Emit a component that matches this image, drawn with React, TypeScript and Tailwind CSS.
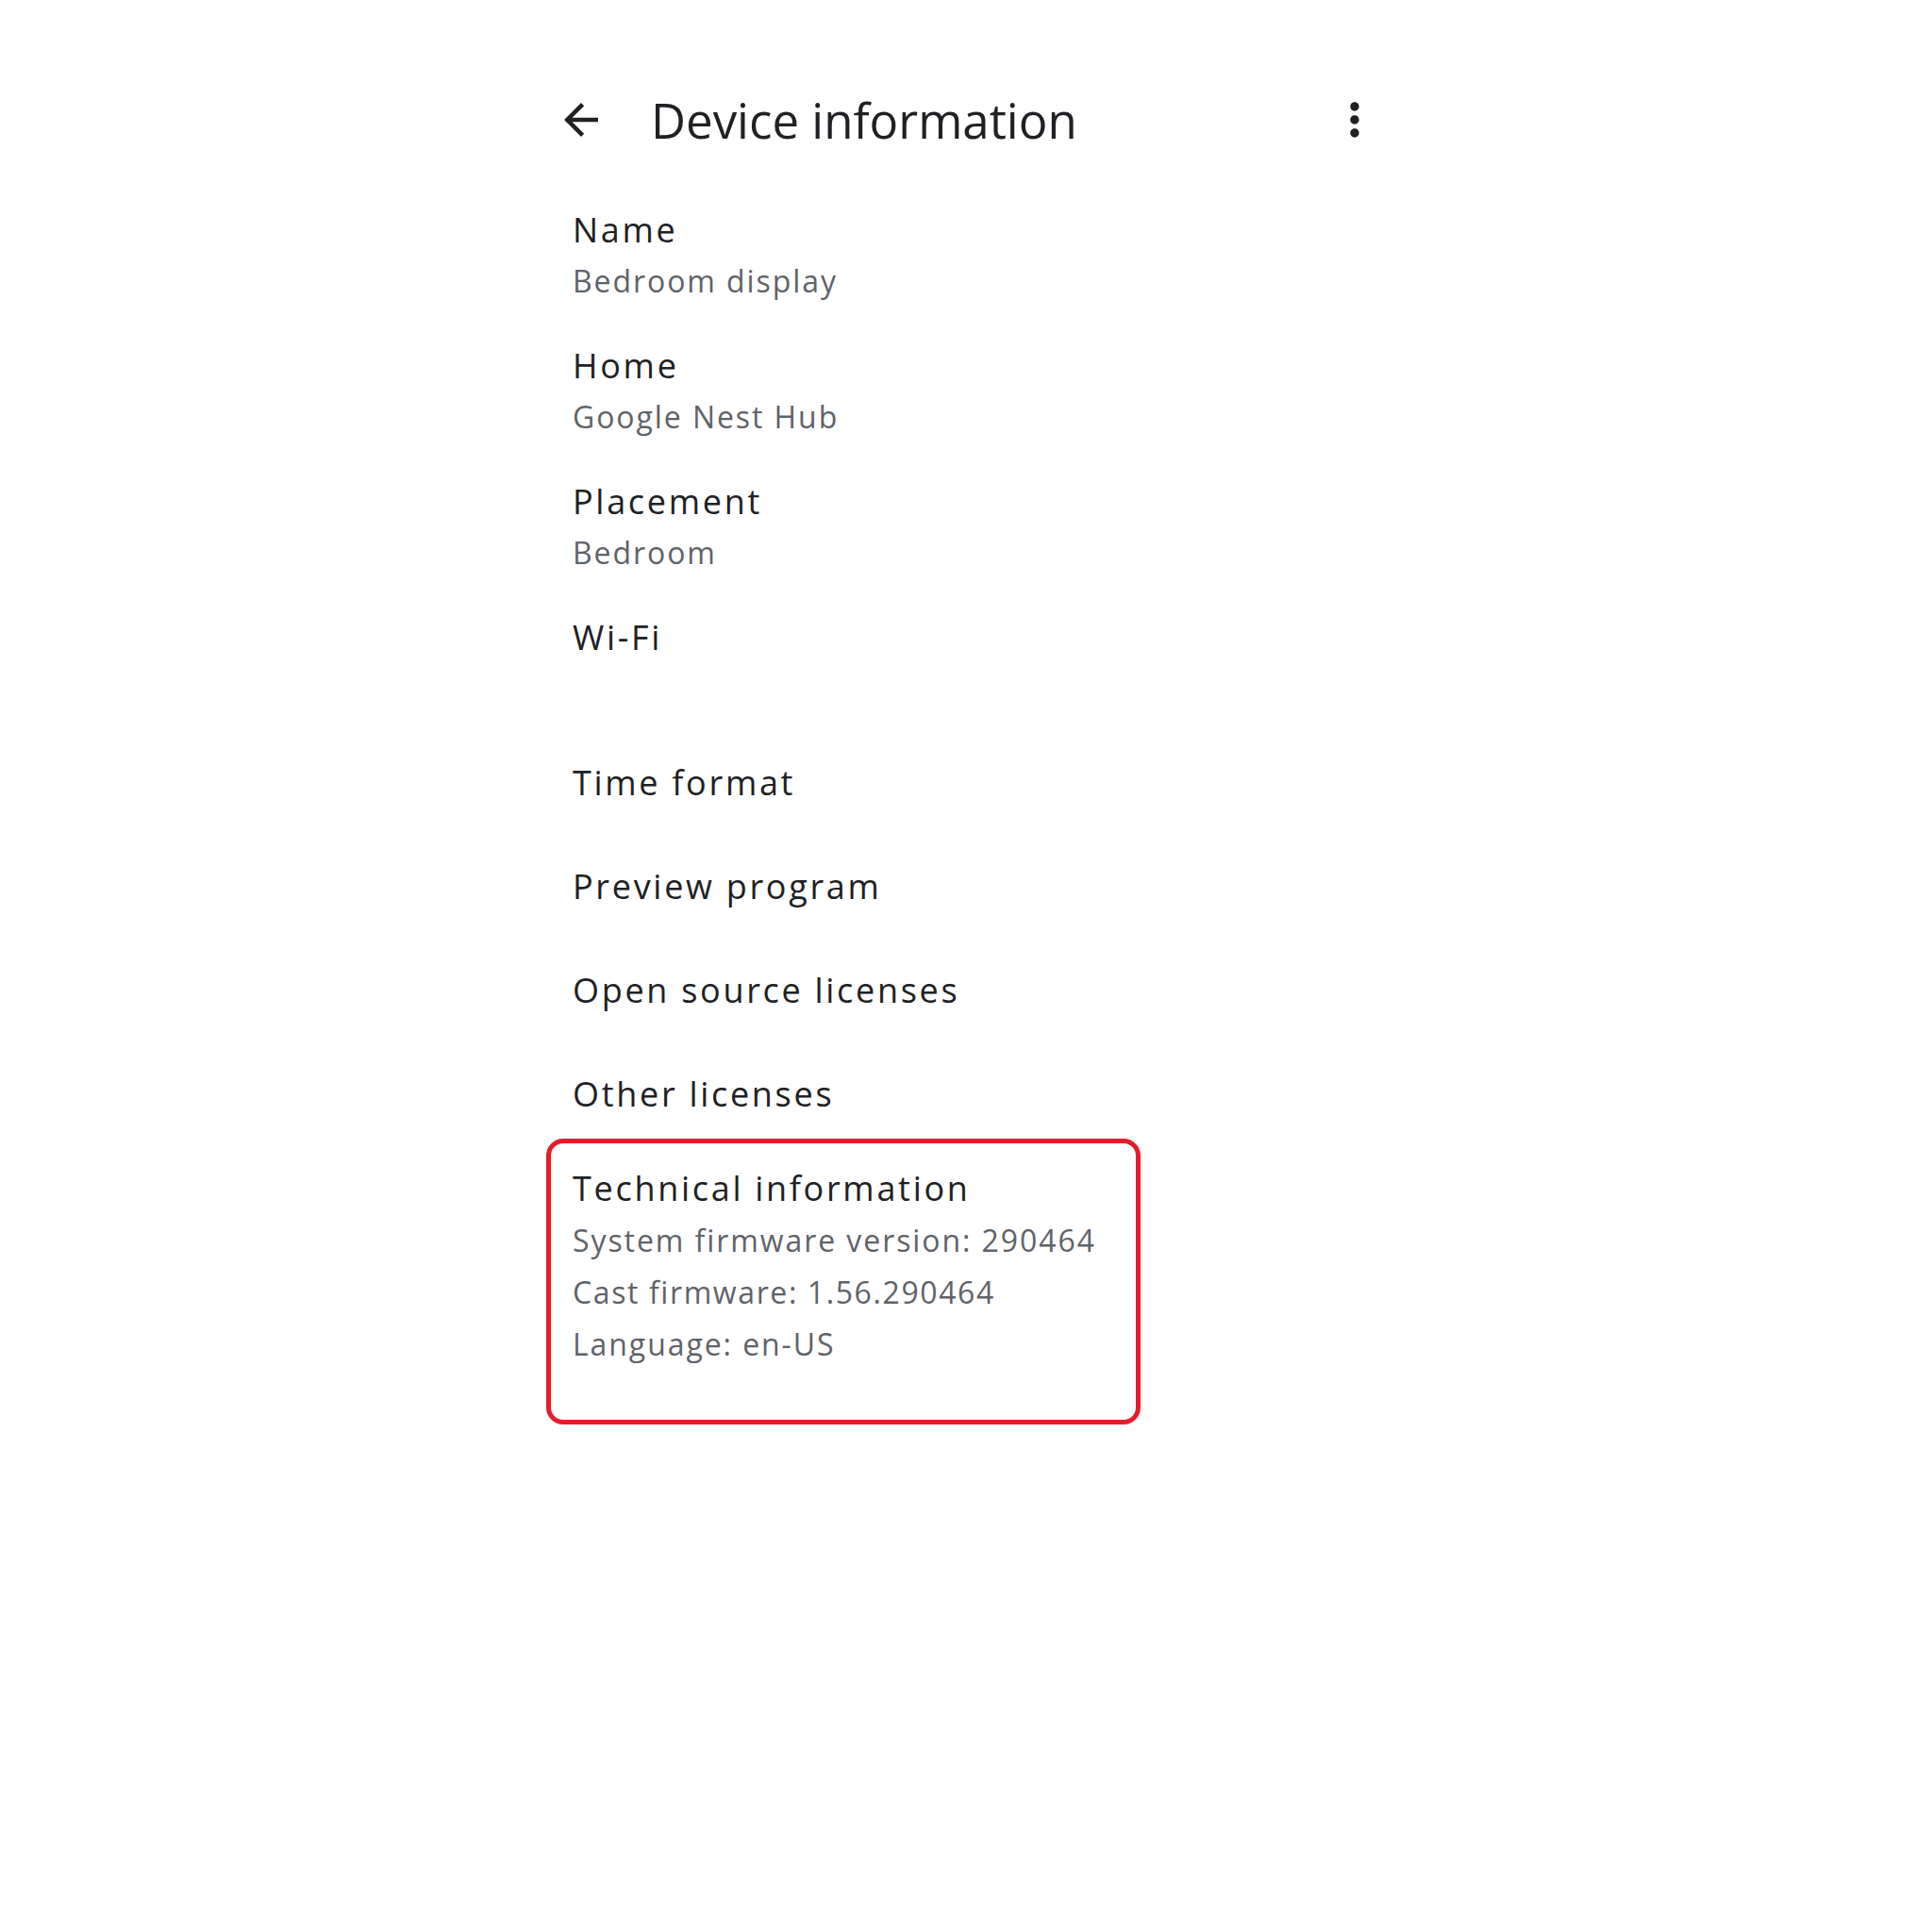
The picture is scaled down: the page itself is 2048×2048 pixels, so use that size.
import React from "react";

const items: { title: string; lines?: string[] }[] = [
  { title: "Name", lines: ["Bedroom display"] },
  { title: "Home", lines: ["Google Nest Hub"] },
  { title: "Placement", lines: ["Bedroom"] },
  { title: "Wi-Fi", lines: [""] },
  { title: "Time format" },
  { title: "Preview program" },
  { title: "Open source licenses" },
  { title: "Other licenses" },
];

const titleCls = "text-[36px] leading-[54px] tracking-[0.075em] text-[#202124]";
const subCls = "text-[32px] leading-[54px] tracking-[0.06em] text-[#5f6368]";

function Row({ title, lines }: { title: string; lines?: string[] }) {
  if (!lines) {
    return (
      <div className="flex h-[110px] items-center pl-[47px]">
        <div className={titleCls}>{title}</div>
      </div>
    );
  }
  return (
    <div className="py-[18px] pl-[47px]">
      <div className={titleCls}>{title}</div>
      {lines.map((l, i) => (
        <div key={i} className={"h-[54px] " + subCls}>
          {l}
        </div>
      ))}
    </div>
  );
}

export default function App() {
  return (
    <div className="min-h-[2048px] w-full bg-white font-['Open_Sans',sans-serif]">
      <div className="mx-auto w-[928px] pt-[79px]">
        {/* header */}
        <div className="flex h-[96px] items-center justify-between pl-[29px] pr-[24px]">
          <div className="flex items-center">
            <svg width="54" height="54" viewBox="0 0 24 24" fill="#202124">
              <path d="M20 11H7.83l5.59-5.59L12 4l-8 8 8 8 1.41-1.41L7.83 13H20v-2z" />
            </svg>
            <h1 className="ml-[47px] text-[51px] leading-none text-[#202124]">Device information</h1>
          </div>
          <svg width="56" height="56" viewBox="0 0 24 24" fill="#202124">
            <path d="M12 8c1.1 0 2-.9 2-2s-.9-2-2-2-2 .9-2 2 .9 2 2 2zm0 2c-1.1 0-2 .9-2 2s.9 2 2 2 2-.9 2-2-.9-2-2-2zm0 6c-1.1 0-2 .9-2 2s.9 2 2 2 2-.9 2-2-.9-2-2-2z" />
          </svg>
        </div>

        <div className="mt-[24px]">
          {items.map((it) => (
            <Row key={it.title} title={it.title} lines={it.lines} />
          ))}

          {/* highlighted technical info */}
          <div className="relative">
            <div className="py-[18px] pl-[47px]">
              <div className={titleCls}>Technical information</div>
              <div className="text-[32px] leading-[55px] tracking-[0.06em] text-[#5f6368]">System firmware version: 290464</div>
              <div className="text-[32px] leading-[55px] tracking-[0.05em] text-[#5f6368]">Cast firmware: 1.56.290464</div>
              <div className="text-[32px] leading-[55px] tracking-[0.06em] text-[#5f6368]">Language: en-US</div>
            </div>
            <div className="pointer-events-none absolute left-[19px] top-[-8px] h-[303px] w-[630px] rounded-[18px] border-[5px] border-[#e31e2a]" />
          </div>
        </div>
      </div>
    </div>
  );
}
